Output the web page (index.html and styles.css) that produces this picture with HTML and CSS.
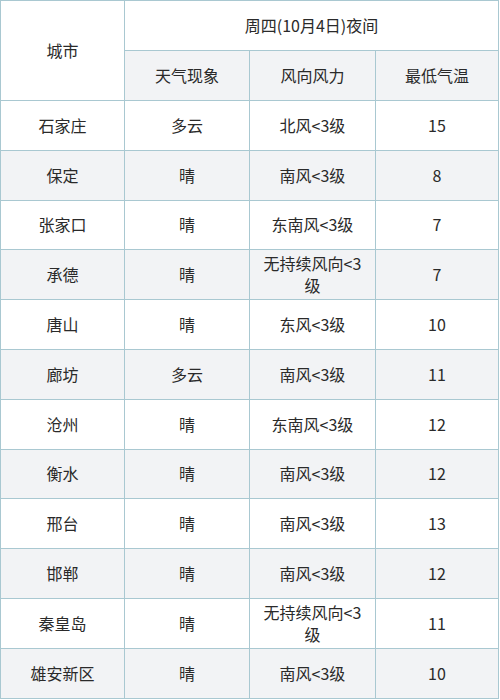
FILE: index.html
```html
<!DOCTYPE html>
<html lang="zh-CN">
<head>
<meta charset="utf-8">
<link rel="stylesheet" href="styles.css">
</head>
<body>
<table class="weather">
  <colgroup>
    <col class="c1"><col class="c2"><col class="c3"><col class="c4">
  </colgroup>
  <thead>
    <tr class="h1">
      <th rowspan="2">城市</th>
      <th colspan="3">周四(10月4日)夜间</th>
    </tr>
    <tr class="h2 alt">
      <th>天气现象</th>
      <th>风向风力</th>
      <th>最低气温</th>
    </tr>
  </thead>
  <tbody>
    <tr><td>石家庄</td><td>多云</td><td>北风&lt;3级</td><td>15</td></tr>
    <tr class="alt"><td>保定</td><td>晴</td><td>南风&lt;3级</td><td>8</td></tr>
    <tr><td>张家口</td><td>晴</td><td>东南风&lt;3级</td><td>7</td></tr>
    <tr class="alt"><td>承德</td><td>晴</td><td>无持续风向&lt;3级</td><td>7</td></tr>
    <tr><td>唐山</td><td>晴</td><td>东风&lt;3级</td><td>10</td></tr>
    <tr class="alt"><td>廊坊</td><td>多云</td><td>南风&lt;3级</td><td>11</td></tr>
    <tr><td>沧州</td><td>晴</td><td>东南风&lt;3级</td><td>12</td></tr>
    <tr class="alt"><td>衡水</td><td>晴</td><td>南风&lt;3级</td><td>12</td></tr>
    <tr><td>邢台</td><td>晴</td><td>南风&lt;3级</td><td>13</td></tr>
    <tr class="alt"><td>邯郸</td><td>晴</td><td>南风&lt;3级</td><td>12</td></tr>
    <tr><td>秦皇岛</td><td>晴</td><td>无持续风向&lt;3级</td><td>11</td></tr>
    <tr class="alt"><td>雄安新区</td><td>晴</td><td>南风&lt;3级</td><td>10</td></tr>
  </tbody>
</table>
</body>
</html>
```
FILE: styles.css
```css
html, body {
  margin: 0;
  padding: 0;
  background: #ffffff;
}
body {
  font-family: "Noto Sans CJK SC", "Noto Sans", sans-serif;
  font-size: 16px;
  color: #2a2a2a;
}
.weather {
  border-collapse: collapse;
  table-layout: fixed;
  width: 498px;
  margin-left: 0;
}
.c1 { width: 124px; }
.c2 { width: 125px; }
.c3 { width: 126px; }
.c4 { width: 123px; }
.weather th,
.weather td {
  border: 1px solid #a9c8d1;
  height: 49px;
  padding: 0 8px 1px;
  text-align: center;
  vertical-align: middle;
  font-weight: normal;
  line-height: 22px;
  box-sizing: border-box;
}
.weather thead tr {
  height: 50px;
}
.weather tbody tr {
  height: 49.8px;
}
.weather tr.alt th,
.weather tr.alt td {
  background: #f2f3f5;
}
```
